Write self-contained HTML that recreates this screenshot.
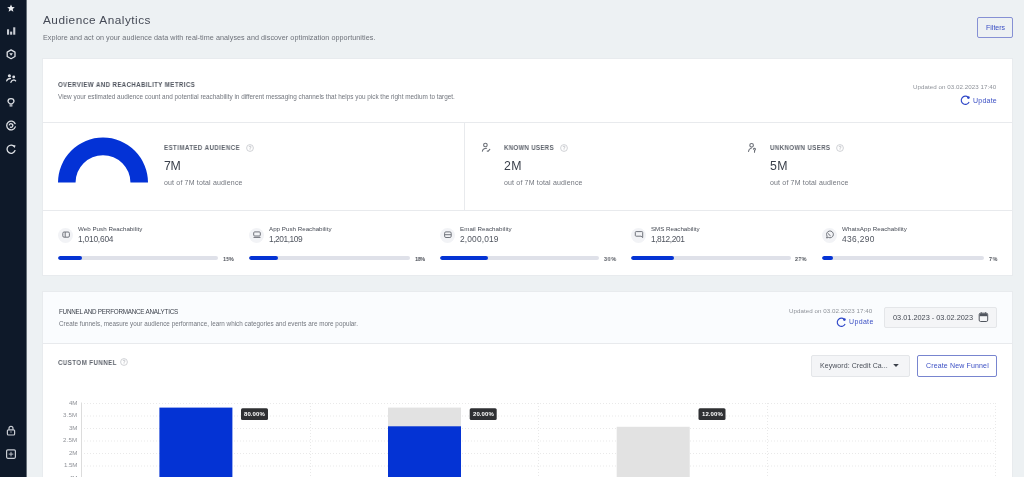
<!DOCTYPE html>
<html><head><meta charset="utf-8">
<style>
*{margin:0;padding:0;box-sizing:border-box}
html,body{width:1024px;height:477px;overflow:hidden;background:#edf1f3;font-family:"Liberation Sans",sans-serif;color:#3b4150}
.a{position:absolute}
.t{position:absolute;white-space:nowrap;line-height:1;will-change:transform}
.hl{position:absolute;height:1px;background:#e8eaed}
.trk{position:absolute;height:4px;border-radius:2px;background:#dfe1e9;overflow:hidden}
.fill{height:4px;border-radius:2px;background:#0433d4}
.ic{position:absolute;width:15px;height:15px;border-radius:50%;background:#f2f3f6}
</style></head><body>
<svg class="a" style="left:0;top:0" width="28" height="477"><rect x="0" y="0" width="26.6" height="477" fill="#0e1929"/></svg>
<svg class="a" style="left:0;top:0" width="27" height="477" viewBox="0 0 27 477">
  <path fill="#eceef2" d="M11 4.6 L12.1 7.1 L14.8 7.3 L12.7 9.1 L13.4 11.7 L11 10.3 L8.6 11.7 L9.3 9.1 L7.2 7.3 L9.9 7.1 Z"/>
  <g fill="#c9cdd4">
    <rect x="7" y="29.3" width="2.1" height="5.4"/>
    <rect x="10.1" y="31.6" width="2.1" height="3.1"/>
    <rect x="13.2" y="27.3" width="2.1" height="7.4"/>
  </g>
  <g fill="none" stroke="#dde0e5" stroke-width="1.3" stroke-linecap="round" stroke-linejoin="round">
    <path d="M11.1 49.9 L15 52.1 L15 56.5 L11.1 58.7 L7.2 56.5 L7.2 52.1 Z"/>
    <path d="M6.7 80.9 Q7.6 78.4 10.4 78.5"/>
    <path d="M10.9 82.3 Q11.8 79.9 13.9 79.9 Q15.1 80 15.6 80.9"/>
    <path d="M11 98.6 C12.9 98.6 14 99.9 14 101.3 C14 102.5 12.9 103.2 12 104 L10 104 C9.1 103.2 8 102.5 8 101.3 C8 99.9 9.1 98.6 11 98.6 Z"/>
    <path d="M10 105.8 L12 105.8"/>
    <path d="M15.3 126.9 A4.4 4.4 0 1 1 15.1 123.6"/>
    <path d="M9.3 124.9 A1.8 1.8 0 1 1 10.4 127.2"/>
    <path d="M15 150.6 A4.1 4.1 0 1 1 14.5 146.8"/>
  </g>
  <circle cx="9.4" cy="75.7" r="1.55" fill="#dde0e5"/>
  <circle cx="13.7" cy="76.9" r="1.45" fill="#dde0e5"/>
  <path d="M9.3 53.2 L12.9 53.2 L11.1 55.7 Z" fill="#dde0e5"/>
  <path d="M13.2 145.1 L15.6 145.6 L14.6 147.7 Z" fill="#dde0e5"/>
  <g fill="none" stroke="#c8ccd3" stroke-width="1.2">
    <rect x="7.4" y="429.8" width="7.2" height="5.2" rx="1"/>
    <path d="M9 429.8 L9 428.4 A2 2 0 0 1 13 428.4 L13 429.8"/>
    <rect x="6.6" y="449.9" width="8.8" height="8.4" rx="1.2"/>
  </g>
  <path d="M11 451.8 v4.6 M8.7 454.1 h4.6" stroke="#c8ccd3" stroke-width="0.9"/>
  <path d="M10.4 432 h1.2" stroke="#c8ccd3" stroke-width="1"/>
</svg>
<div class="t" style="left:42.50px;top:15px;font-size:11.8px;color:#454a56;letter-spacing:0.497px;">Audience Analytics</div>
<div class="t" style="left:42.50px;top:34px;font-size:7.2px;color:#6d7179;letter-spacing:0.059px;">Explore and act on your audience data with real-time analyses and discover optimization opportunities.</div>
<div class="a" style="left:976.5px;top:17px;width:36.5px;height:21px;border:1px solid #8690d4;border-radius:2px"></div>
<div class="t" style="left:985.60px;top:24px;font-size:7px;color:#3b4fc4;letter-spacing:0.007px;">Filters</div>
<div class="a" style="left:42px;top:58px;width:971px;height:218px;background:#fff;border:1px solid #e8ebee"></div>
<div class="t" style="left:58.20px;top:82px;font-size:6.6px;color:#4f545e;letter-spacing:0.468px;font-weight:bold;transform:scaleX(0.92);transform-origin:0 0;">OVERVIEW AND REACHABILITY METRICS</div>
<div class="t" style="left:58.20px;top:94px;font-size:6.4px;color:#72767e;letter-spacing:-0.006px;">View your estimated audience count and potential reachability in different messaging channels that helps you pick the right medium to target.</div>
<div class="t" style="left:913.40px;top:84px;font-size:6.2px;color:#8e9299;letter-spacing:0.048px;">Updated on 03.02.2023 17:40</div>
<div class="t" style="left:973.00px;top:97px;font-size:7.0px;color:#3b4fc4;letter-spacing:0.225px;">Update</div>
<svg class="a" style="left:960px;top:95.2px" width="12" height="11" viewBox="0 0 12 11">
  <path d="M9.1 7.0 A4.1 4.1 0 1 1 8.2 2.3" fill="none" stroke="#3048c8" stroke-width="1.15"/>
  <circle cx="8.4" cy="2.55" r="1.35" fill="#2f46c8"/>
</svg>
<div class="hl" style="left:43px;top:122px;width:969px"></div>
<svg class="a" style="left:57px;top:136px" width="92" height="48" viewBox="0 0 92 48">
  <path d="M1 46.6 A45 45 0 0 1 91 46.6 L73.45 46.6 A27.45 27.45 0 0 0 18.55 46.6 Z" fill="#0332d6"/>
</svg>
<div class="t" style="left:164.00px;top:145px;font-size:6.6px;color:#5d626b;letter-spacing:0.498px;font-weight:bold;transform:scaleX(0.92);transform-origin:0 0;">ESTIMATED AUDIENCE</div>
<svg class="a" style="left:246px;top:144px" width="8" height="8" viewBox="0 0 8 8"><circle cx="4" cy="4" r="3.4" fill="none" stroke="#c4c6cb" stroke-width="0.8"/><path d="M3.1 3.1 A0.95 0.95 0 1 1 4.2 4 L4 4.7" fill="none" stroke="#b0b3b9" stroke-width="0.7"/><circle cx="4" cy="5.7" r="0.42" fill="#b0b3b9"/></svg>
<div class="t" style="left:164.00px;top:160px;font-size:12.3px;color:#3a404b;letter-spacing:-0.287px;">7M</div>
<div class="t" style="left:164.00px;top:179px;font-size:7.0px;color:#72767e;letter-spacing:0.164px;">out of 7M total audience</div>
<div class="t" style="left:503.80px;top:145px;font-size:6.6px;color:#5d626b;letter-spacing:0.368px;font-weight:bold;transform:scaleX(0.92);transform-origin:0 0;">KNOWN USERS</div>
<svg class="a" style="left:559.7px;top:144px" width="8" height="8" viewBox="0 0 8 8"><circle cx="4" cy="4" r="3.4" fill="none" stroke="#c4c6cb" stroke-width="0.8"/><path d="M3.1 3.1 A0.95 0.95 0 1 1 4.2 4 L4 4.7" fill="none" stroke="#b0b3b9" stroke-width="0.7"/><circle cx="4" cy="5.7" r="0.42" fill="#b0b3b9"/></svg>
<div class="t" style="left:503.80px;top:160px;font-size:12.3px;color:#3a404b;letter-spacing:0.413px;">2M</div>
<div class="t" style="left:503.80px;top:179px;font-size:7.0px;color:#72767e;letter-spacing:0.164px;">out of 7M total audience</div>
<div class="t" style="left:769.90px;top:145px;font-size:6.6px;color:#5d626b;letter-spacing:0.463px;font-weight:bold;transform:scaleX(0.92);transform-origin:0 0;">UNKNOWN USERS</div>
<svg class="a" style="left:836.3px;top:144px" width="8" height="8" viewBox="0 0 8 8"><circle cx="4" cy="4" r="3.4" fill="none" stroke="#c4c6cb" stroke-width="0.8"/><path d="M3.1 3.1 A0.95 0.95 0 1 1 4.2 4 L4 4.7" fill="none" stroke="#b0b3b9" stroke-width="0.7"/><circle cx="4" cy="5.7" r="0.42" fill="#b0b3b9"/></svg>
<div class="t" style="left:769.90px;top:160px;font-size:12.3px;color:#3a404b;letter-spacing:0.413px;">5M</div>
<div class="t" style="left:769.90px;top:179px;font-size:7.0px;color:#72767e;letter-spacing:0.164px;">out of 7M total audience</div>
<div class="a" style="left:464px;top:122px;width:1px;height:88px;background:#e8eaed"></div>
<svg class="a" style="left:478px;top:140px" width="16" height="16" viewBox="478 140 16 16">
  <g fill="none" stroke="#6a6e76" stroke-width="1.1" stroke-linecap="round">
    <circle cx="485.4" cy="145" r="1.8"/>
    <path d="M482.4 151.2 C482.6 149.4 483.8 148.3 486.6 148.2"/>
    <path d="M487.2 151 L488 151.3 L489.8 149.4"/>
  </g>
</svg>
<svg class="a" style="left:744px;top:140px" width="16" height="16" viewBox="744 140 16 16">
  <g fill="none" stroke="#6a6e76" stroke-width="1.1" stroke-linecap="round">
    <circle cx="751.6" cy="145.3" r="1.8"/>
    <path d="M748.5 151.4 C748.7 149.8 749.6 148.6 751.2 148.3"/>
    <path d="M753.4 149.2 A1 1 0 1 1 754.6 150.2 L754.5 152.2"/>
  </g>
</svg>
<div class="hl" style="left:43px;top:209.5px;width:969px"></div>
<div class="ic" style="left:58.40px;top:228px"></div>
<svg class="a" style="left:58.40px;top:227.4px" width="16" height="16" viewBox="0 0 16 16"><g fill="none" stroke="#70747c" stroke-width="1" stroke-linejoin="round"><rect x="4.8" y="5" width="6.6" height="5.2" rx="1.3"/><path d="M7.2 5 V10.2"/></g></svg>
<div class="t" style="left:78.10px;top:226px;font-size:6.2px;color:#454a54;letter-spacing:0.026px;">Web Push Reachability</div>
<div class="t" style="left:78.10px;top:235px;font-size:8.4px;color:#50555f;letter-spacing:-0.221px;">1,010,604</div>
<div class="trk" style="left:58.40px;top:256px;width:160.10px"><div class="fill" style="width:15%"></div></div>
<div class="t" style="left:223.10px;top:257px;font-size:5.8px;color:#4a4e56;letter-spacing:0.196px;font-weight:bold;transform:scaleX(0.9);transform-origin:0 0;">15%</div>
<div class="ic" style="left:249.30px;top:228px"></div>
<svg class="a" style="left:249.30px;top:227.4px" width="16" height="16" viewBox="0 0 16 16"><g fill="none" stroke="#70747c" stroke-width="1" stroke-linejoin="round"><rect x="4.7" y="4.9" width="6.6" height="4.1" rx="1"/><path d="M4.5 10.4 H11.5"/></g></svg>
<div class="t" style="left:269.00px;top:226px;font-size:6.2px;color:#454a54;letter-spacing:0.016px;">App Push Reachability</div>
<div class="t" style="left:269.00px;top:235px;font-size:8.4px;color:#50555f;letter-spacing:-0.446px;">1,201,109</div>
<div class="trk" style="left:249.30px;top:256px;width:160.80px"><div class="fill" style="width:18%"></div></div>
<div class="t" style="left:414.70px;top:257px;font-size:5.8px;color:#4a4e56;letter-spacing:-0.193px;font-weight:bold;transform:scaleX(0.9);transform-origin:0 0;">18%</div>
<div class="ic" style="left:440.20px;top:228px"></div>
<svg class="a" style="left:440.20px;top:227.4px" width="16" height="16" viewBox="0 0 16 16"><g fill="none" stroke="#70747c" stroke-width="1" stroke-linejoin="round"><rect x="4.6" y="4.9" width="6.6" height="5.6" rx="1.3"/><path d="M4.6 7.7 H11.2"/></g></svg>
<div class="t" style="left:459.90px;top:226px;font-size:6.2px;color:#454a54;letter-spacing:0.047px;">Email Reachability</div>
<div class="t" style="left:459.90px;top:235px;font-size:8.4px;color:#50555f;letter-spacing:0.154px;">2,000,019</div>
<div class="trk" style="left:440.20px;top:256px;width:158.90px"><div class="fill" style="width:30%"></div></div>
<div class="t" style="left:603.70px;top:257px;font-size:5.8px;color:#4a4e56;letter-spacing:0.862px;font-weight:bold;transform:scaleX(0.9);transform-origin:0 0;">30%</div>
<div class="ic" style="left:631.10px;top:228px"></div>
<svg class="a" style="left:631.10px;top:227.4px" width="16" height="16" viewBox="0 0 16 16"><g fill="none" stroke="#70747c" stroke-width="1" stroke-linejoin="round"><path d="M5.1 4.6 H10.9 Q11.7 4.6 11.7 5.4 V10.6 L10.1 9.2 H5.1 Q4.3 9.2 4.3 8.4 V5.4 Q4.3 4.6 5.1 4.6 Z"/></g></svg>
<div class="t" style="left:650.80px;top:226px;font-size:6.2px;color:#454a54;letter-spacing:-0.016px;">SMS Reachability</div>
<div class="t" style="left:650.80px;top:235px;font-size:8.4px;color:#50555f;letter-spacing:-0.434px;">1,812,201</div>
<div class="trk" style="left:631.10px;top:256px;width:159.50px"><div class="fill" style="width:27%"></div></div>
<div class="t" style="left:795.20px;top:257px;font-size:5.8px;color:#4a4e56;letter-spacing:0.529px;font-weight:bold;transform:scaleX(0.9);transform-origin:0 0;">27%</div>
<div class="ic" style="left:822.00px;top:228px"></div>
<svg class="a" style="left:822.00px;top:227.4px" width="16" height="16" viewBox="0 0 16 16"><g fill="none" stroke="#70747c" stroke-width="1" stroke-linejoin="round"><path d="M4.6 11 L5.1 9.2 A3.4 3.4 0 1 1 6.4 10.4 Z"/><path d="M6.4 6.4 Q6.8 8.2 8.6 8.8"/></g></svg>
<div class="t" style="left:841.70px;top:226px;font-size:6.2px;color:#454a54;letter-spacing:0.050px;">WhatsApp Reachability</div>
<div class="t" style="left:841.70px;top:235px;font-size:8.4px;color:#50555f;letter-spacing:0.339px;">436,290</div>
<div class="trk" style="left:822.00px;top:256px;width:162.40px"><div class="fill" style="width:7%"></div></div>
<div class="t" style="left:989.00px;top:257px;font-size:5.8px;color:#4a4e56;letter-spacing:1.062px;font-weight:bold;transform:scaleX(0.9);transform-origin:0 0;">7%</div>
<div class="a" style="left:42px;top:291px;width:971px;height:190px;background:#fff;border:1px solid #e8ebee"></div>
<div class="a" style="left:43px;top:292px;width:969px;height:51px;background:#fafcfe"></div>
<div class="hl" style="left:43px;top:343px;width:969px"></div>
<div class="t" style="left:58.75px;top:309px;font-size:6.3px;color:#3a3f49;letter-spacing:-0.230px;">FUNNEL AND PERFORMANCE ANALYTICS</div>
<div class="t" style="left:58.75px;top:321px;font-size:6.3px;color:#72767e;letter-spacing:0.017px;">Create funnels, measure your audience performance, learn which categories and events are more popular.</div>
<div class="t" style="left:789.40px;top:308px;font-size:6.2px;color:#8e9299;letter-spacing:0.052px;">Updated on 03.02.2023 17:40</div>
<div class="t" style="left:848.50px;top:318px;font-size:7.0px;color:#3b4fc4;letter-spacing:0.345px;">Update</div>
<svg class="a" style="left:835.5px;top:316.5px" width="12" height="11" viewBox="0 0 12 11">
  <path d="M9.1 7.0 A4.1 4.1 0 1 1 8.2 2.3" fill="none" stroke="#3048c8" stroke-width="1.15"/>
  <circle cx="8.4" cy="2.55" r="1.35" fill="#2f46c8"/>
</svg>
<div class="a" style="left:884px;top:307px;width:113px;height:21px;background:#f4f5f7;border:1px solid #e4e6e9;border-radius:2px"></div>
<div class="t" style="left:893.00px;top:314px;font-size:7.35px;color:#454a54;">03.01.2023 - 03.02.2023</div>
<svg class="a" style="left:976px;top:310px" width="14" height="14" viewBox="976 310 14 14"><rect x="979.2" y="313.2" width="8.5" height="8.3" rx="1.4" fill="none" stroke="#50555e" stroke-width="1"/><rect x="979.6" y="313.6" width="7.7" height="2.6" fill="#50555e"/><path d="M981.3 312.2 L981.3 313.6 M985.6 312.2 L985.6 313.6" stroke="#50555e" stroke-width="0.9"/></svg>
<div class="t" style="left:58.35px;top:360px;font-size:6.6px;color:#5d626b;letter-spacing:0.538px;font-weight:bold;transform:scaleX(0.92);transform-origin:0 0;">CUSTOM FUNNEL</div>
<svg class="a" style="left:119.6px;top:358px" width="8" height="8" viewBox="0 0 8 8"><circle cx="4" cy="4" r="3.4" fill="none" stroke="#c4c6cb" stroke-width="0.8"/><path d="M3.1 3.1 A0.95 0.95 0 1 1 4.2 4 L4 4.7" fill="none" stroke="#b0b3b9" stroke-width="0.7"/><circle cx="4" cy="5.7" r="0.42" fill="#b0b3b9"/></svg>
<div class="a" style="left:811px;top:355px;width:99px;height:21.5px;background:#f4f5f7;border:1px solid #e4e6e9;border-radius:2px"></div>
<div class="t" style="left:819.50px;top:362px;font-size:7.0px;color:#4a4f59;letter-spacing:0.059px;">Keyword: Credit Ca...</div>
<svg class="a" style="left:892px;top:363px" width="8" height="5" viewBox="0 0 8 5"><path d="M1.2 1 L6.8 1 L4 4 Z" fill="#3c414a"/></svg>
<div class="a" style="left:917px;top:355px;width:80px;height:21.5px;border:1px solid #7885cf;border-radius:2px"></div>
<div class="t" style="left:926.00px;top:362px;font-size:7.0px;color:#3b4fc4;letter-spacing:0.149px;">Create New Funnel</div>
<svg class="a" style="left:0;top:390px" width="1024" height="87" viewBox="0 390 1024 87">
  <g stroke="#e9e9e9" stroke-width="1" stroke-dasharray="1 2">
    <path d="M81 403.5 H996 M81 416 H996 M81 428.5 H996 M81 441 H996 M81 453.5 H996 M81 466 H996"/>
    <path d="M310.5 403 V477 M538.5 403 V477 M767.5 403 V477 M995.5 403 V477"/>
  </g>
  <path d="M81.5 402.5 V477" stroke="#dcdcdc" stroke-width="1"/>
  <rect x="159.4" y="407.6" width="73" height="70" fill="#0433d4"/>
  <rect x="388" y="407.6" width="73" height="70" fill="#e2e2e2"/>
  <rect x="388" y="426.3" width="73" height="51" fill="#0433d4"/>
  <rect x="616.7" y="426.8" width="73" height="51" fill="#e2e2e2"/>
  <g fill="#2f3033">
    <rect x="241" y="408.3" width="27" height="11.7" rx="1.5"/>
    <rect x="469.7" y="408.3" width="27" height="11.7" rx="1.5"/>
    <rect x="698.5" y="408.3" width="27" height="11.7" rx="1.5"/>
  </g>
</svg>
<div class="t" style="left:244.30px;top:411px;font-size:6.0px;color:#ffffff;letter-spacing:0.090px;font-weight:bold;">80.00%</div>
<div class="t" style="left:472.90px;top:411px;font-size:6.0px;color:#ffffff;letter-spacing:0.090px;font-weight:bold;">20.00%</div>
<div class="t" style="left:701.60px;top:411px;font-size:6.0px;color:#ffffff;letter-spacing:0.090px;font-weight:bold;">12.00%</div>
<div class="t" style="left:68.70px;top:400px;font-size:6.2px;color:#8f9298;letter-spacing:-0.313px;">4M</div>
<div class="t" style="left:62.70px;top:412px;font-size:6.2px;color:#8f9298;letter-spacing:0.172px;">3.5M</div>
<div class="t" style="left:68.70px;top:425px;font-size:6.2px;color:#8f9298;letter-spacing:-0.313px;">3M</div>
<div class="t" style="left:62.70px;top:437px;font-size:6.2px;color:#8f9298;letter-spacing:0.172px;">2.5M</div>
<div class="t" style="left:68.70px;top:450px;font-size:6.2px;color:#8f9298;letter-spacing:-0.313px;">2M</div>
<div class="t" style="left:63.50px;top:462px;font-size:6.2px;color:#8f9298;letter-spacing:-0.095px;">1.5M</div>
<div class="t" style="left:69.50px;top:475px;font-size:6.2px;color:#8f9298;letter-spacing:-1.113px;">1M</div>
</body></html>
